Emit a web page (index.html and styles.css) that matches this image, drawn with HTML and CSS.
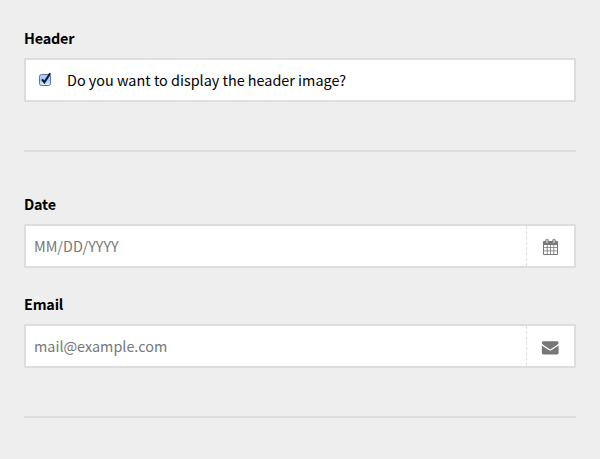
FILE: index.html
```html
<!DOCTYPE html>
<html lang="en">
<head>
<meta charset="utf-8">
<title>Form</title>
<link rel="stylesheet" href="styles.css">
</head>
<body>
<form class="form">
  <section class="section">
    <div class="field">
      <span class="label">Header</span>
      <label class="control">
        <svg class="check" width="14" height="14" viewBox="0 0 14 14">
          <defs><linearGradient id="fill" x1="0" y1="0" x2="0" y2="1"><stop offset="0" stop-color="#b5cff2"/><stop offset=".5" stop-color="#a5cbf5"/><stop offset="1" stop-color="#d3f2ff"/></linearGradient></defs>
          <rect x="1.5" y="2.5" width="11" height="11" rx="2" fill="url(#fill)" stroke="#626fa8"/>
          <path d="M4 7.3 6.4 10.3 12.2 1.3" fill="none" stroke="#0b1730" stroke-width="2.1"/>
        </svg>
        <span class="question">Do you want to display the header image?</span>
      </label>
    </div>
  </section>
  <section class="section">
    <div class="field">
      <span class="label">Date</span>
      <div class="control">
        <span class="placeholder">MM/DD/YYYY</span>
        <span class="addon">
          <svg class="calendar" width="16" height="18" viewBox="-.5 0 16 18">
            <path fill="#777" fill-rule="evenodd" d="M1.5 3h13q1 0 1 1v12q0 1-1 1h-13q-1 0-1-1V4q0-1 1-1zM1.5 7v2.3h2.8V7zm3.6 0v2.3h2.5V7zm3.3 0v2.3h2.5V7zm3.3 0v2.3h2.8V7zM1.5 10v2.6h2.8V10zm3.6 0v2.6h2.5V10zm3.3 0v2.6h2.5V10zm3.3 0v2.6h2.8V10zM1.5 13.3v2.7h2.8v-2.7zm3.6 0v2.7h2.5v-2.7zm3.3 0v2.7h2.5v-2.7zm3.3 0v2.7h2.8v-2.7z"/>
            <rect x="3.1" y="1.3" width="2.8" height="4.2" rx="1" fill="#bbb" stroke="#777" stroke-width=".8"/>
            <rect x="10.1" y="1.3" width="2.8" height="4.2" rx="1" fill="#bbb" stroke="#777" stroke-width=".8"/>
          </svg>
        </span>
      </div>
    </div>
    <div class="field">
      <span class="label">Email</span>
      <div class="control">
        <span class="placeholder">mail@example.com</span>
        <span class="addon">
          <svg class="mail" width="18" height="14" viewBox=".1 .2 17 13.5" preserveAspectRatio="none">
            <path fill="#777" d="M2.3.5h13q1.4 0 1.4 1.3 0 1.2-1.5 2.3L10.6 7.3Q9.4 8.3 8.8 8.3T7 7.3L2.4 4.1Q.9 3 .9 1.9.9.5 2.3.5zM.9 4.5 6.6 8.5q1.4 1 2.2 1t2.2-1l5.7-4v7.3q0 1.3-1.3 1.3H2.2Q.9 13.1.9 11.8z"/>
          </svg>
        </span>
      </div>
    </div>
  </section>
</form>
</body>
</html>
```
FILE: styles.css
```css
* { box-sizing: border-box; }
body {
  margin: 0;
  background: #eee;
  color: #000;
  font-family: "Noto Sans CJK SC", "Source Sans Pro", sans-serif;
  font-size: 14.4px;
}
.form { padding: 18px 24px 0; }
.section {
  padding-bottom: 48px;
  margin-bottom: 32px;
  border-bottom: 2px solid #ddd;
}
.field + .field { margin-top: 16px; }
.label {
  display: block;
  height: 40px;
  line-height: 40px;
  font-weight: 700;
  letter-spacing: -.2px;
}
.control {
  display: flex;
  align-items: center;
  height: 44px;
  border: 2px solid #ddd;
  background: #fff;
  white-space: nowrap;
}
.check { margin: 0 15px 2px 12px; flex: none; }
.question { line-height: 40px; }
.placeholder { flex: 1; padding-left: 8px; line-height: 40px; color: #777; }
.addon {
  display: flex;
  align-items: center;
  justify-content: center;
  width: 48px;
  height: 40px;
  padding-right: 1px;
  border-left: 1px dashed #ddd;
}
.calendar { margin-top: 2px; }
.mail { margin-top: 4px; }
```
